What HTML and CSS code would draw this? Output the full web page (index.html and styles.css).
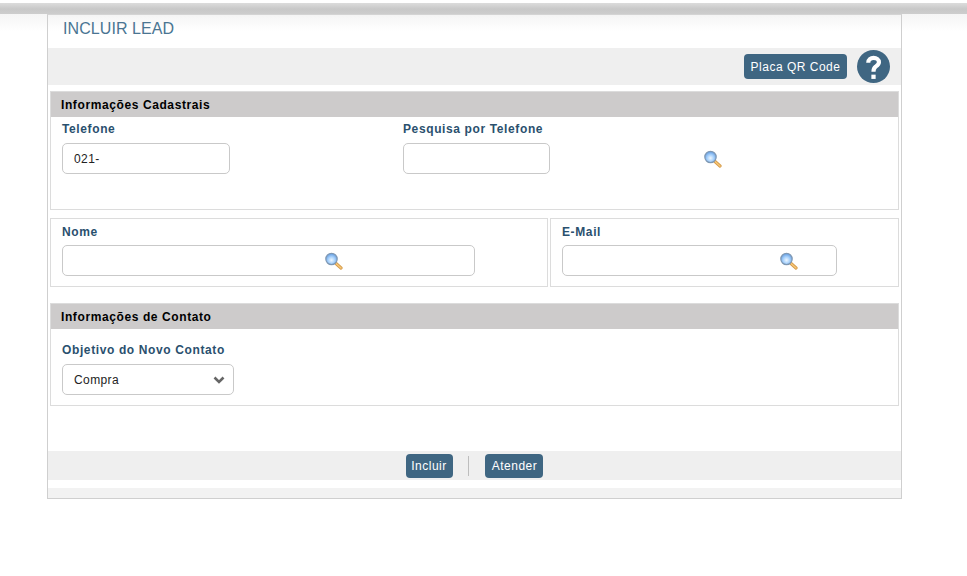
FILE: index.html
```html
<!DOCTYPE html>
<html lang="pt-BR">
<head>
<meta charset="utf-8">
<title>Incluir Lead</title>
<link rel="stylesheet" href="styles.css">
</head>
<body>
<svg class="defs" width="0" height="0" aria-hidden="true">
  <defs>
    <radialGradient id="lens" cx="0.5" cy="0.6" r="0.6">
      <stop offset="0" stop-color="#eef7ff"/>
      <stop offset="0.5" stop-color="#a6d0fb"/>
      <stop offset="1" stop-color="#5d98e0"/>
    </radialGradient>
    <symbol id="mag" viewBox="0 0 20 18">
      <path d="M12 11.5 L17 16" stroke="#d49a4a" stroke-width="3.2" stroke-linecap="round"/>
      <path d="M12 11.5 L17 16" stroke="#f8c878" stroke-width="1.5" stroke-linecap="round"/>
      <circle cx="7.5" cy="7" r="5.7" fill="url(#lens)" stroke="#7f98b3" stroke-width="1.2"/>
    </symbol>
  </defs>
</svg>
<div class="topbar"></div>
<main class="panel">
  <h1 class="title">INCLUIR LEAD</h1>
  <div class="toolbar">
    <button class="btn" type="button">Placa QR Code</button>
    <svg class="help" viewBox="0 0 34 34" aria-label="Ajuda">
      <circle cx="17" cy="17" r="17" fill="#3f6682"/>
      <path d="M11.6 13.2 C11.6 9.8 14.1 8.2 17.1 8.2 C20.2 8.2 22.6 10 22.6 12.6 C22.6 15 20.8 16 19.1 17.2 C17.6 18.3 17 19.4 17 22.4" fill="none" stroke="#fff" stroke-width="4.3"/>
      <rect x="14.8" y="25.4" width="4.4" height="4.4" fill="#fff"/>
    </svg>
  </div>
  <section class="box box-cadastro">
    <h2 class="box-head">Informações Cadastrais</h2>
    <div class="phone-row">
      <div class="field field-phone">
        <label class="label">Telefone</label>
        <div class="input input-phone">021-</div>
      </div>
      <div class="field field-search">
        <label class="label">Pesquisa por Telefone</label>
        <div class="input input-search"></div>
      </div>
      <svg class="mag mag-phone"><use href="#mag"/></svg>
    </div>
  </section>
  <div class="split">
    <section class="box cell cell-name">
      <label class="label">Nome</label>
      <div class="input input-name"><svg class="mag"><use href="#mag"/></svg></div>
    </section>
    <section class="box cell cell-mail">
      <label class="label">E-Mail</label>
      <div class="input input-mail"><svg class="mag"><use href="#mag"/></svg></div>
    </section>
  </div>
  <section class="box box-contato">
    <h2 class="box-head">Informações de Contato</h2>
    <div class="contact-body">
      <label class="label">Objetivo do Novo Contato</label>
      <div class="input input-select">Compra
        <svg class="chev" viewBox="0 0 12 8"><path d="M1.5 1.5 L6 6 L10.5 1.5" fill="none" stroke="#666" stroke-width="2.6"/></svg>
      </div>
    </div>
  </section>
  <div class="actions">
    <button class="btn btn-sm" type="button">Incluir</button>
    <span class="sep"></span>
    <button class="btn btn-sm" type="button">Atender</button>
  </div>
  <div class="foot"></div>
</main>
</body>
</html>
```
FILE: styles.css
```css
* { box-sizing: border-box; }
html, body { margin: 0; padding: 0; }
body {
  width: 967px;
  height: 576px;
  overflow: hidden;
  background: linear-gradient(#fff 14px, #f5f5f5 14px, #fff 32px);
  padding-top: 3px;
  font-family: "Liberation Sans", Arial, sans-serif;
  font-size: 12px;
  color: #000;
}
.defs { display: block; height: 0; }
.topbar {
  height: 11px;
  background: linear-gradient(#dcdcdc, #c8c8c8 55%, #cdcdcd);
}
.panel {
  width: 855px;
  height: 485px;
  margin-left: 47px;
  border: 1px solid #cfcfcf;
  border-top-color: #d4d4d4;
  background: #fff;
}
.title {
  margin: 0;
  height: 33px;
  padding: 4px 0 0 15px;
  font-size: 16px;
  line-height: 19px;
  font-weight: normal;
  letter-spacing: 0.08px;
  color: #4a7592;
  background: linear-gradient(#f5f5f5, #fff 16px);
}
.toolbar {
  height: 37px;
  background: #efefef;
  display: flex;
  align-items: flex-start;
  justify-content: flex-end;
  padding: 2px 11px 0 0;
  gap: 10px;
}
.btn {
  border: 0;
  border-radius: 4px;
  background: #3f6682;
  color: #fff;
  font-family: "Liberation Sans", Arial, sans-serif;
  font-size: 12px;
  letter-spacing: 0.5px;
  height: 25px;
  width: 103px;
  padding: 0;
  margin-top: 4px;
}
.help { width: 33px; height: 33px; display: block; flex: none; }
.box {
  border: 1px solid #dcdcdc;
  background: #fff;
}
.box-cadastro { margin: 6px 2px 0; height: 119px; }
.box-head {
  margin: 0;
  height: 25px;
  padding-left: 10px;
  background: #cdcbcb;
  font-size: 12px;
  line-height: 26px;
  font-weight: bold;
  letter-spacing: 0.6px;
  color: #000;
}
.phone-row { display: flex; align-items: flex-start; padding: 4px 0 0 11px; }
.field-phone { width: 341px; }
.field-search { width: 300px; }
.label {
  display: block;
  height: 22px;
  font-size: 12px;
  line-height: 17px;
  font-weight: bold;
  letter-spacing: 0.62px;
  color: #2a506e;
}
.input {
  height: 31px;
  border: 1px solid #c9c9c9;
  border-radius: 5px;
  background: #fff;
  font-size: 12px;
  line-height: 30px;
  letter-spacing: 0.4px;
  padding-left: 11px;
  color: #222;
}
.input-phone { width: 168px; }
.input-search { width: 147px; }
.mag { width: 20px; height: 18px; display: block; flex: none; }
.mag-phone { margin-top: 29px; }
.split { display: flex; gap: 2px; margin: 8px 2px 0; }
.cell { height: 69px; padding: 5px 0 0 11px; }
.cell .label { height: 21px; }
.cell-name { width: 498px; }
.cell-mail { width: 349px; }
.cell .input { display: flex; align-items: center; }
.input-name { width: 413px; padding-left: 261px; }
.input-mail { width: 275px; padding-left: 216px; }
.box-contato { margin: 16px 2px 0; height: 103px; }
.contact-body { padding: 13px 0 0 11px; }
.input-select { width: 172px; display: flex; align-items: center; justify-content: space-between; padding-right: 8px; }
.chev { width: 12px; height: 8px; display: block; }
.actions {
  margin-top: 45px;
  height: 29px;
  background: #efefef;
  display: flex;
  align-items: center;
  justify-content: center;
  padding-right: 1px;
}
.btn-sm { height: 24px; margin-top: 0; }
.btn-sm:first-child { width: 47px; }
.btn-sm:last-child { width: 58px; padding-left: 2px; }
.sep { width: 1px; height: 20px; background: #bdbdbd; margin: 0 16px 0 15px; }
.foot { height: 10px; margin-top: 8px; background: #f2f2f2; }
```
